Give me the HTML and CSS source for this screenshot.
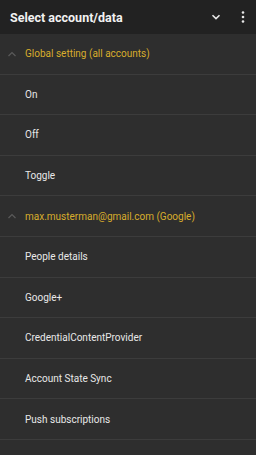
FILE: index.html
```html
<!DOCTYPE html>
<html lang="en">
<head>
  <meta charset="UTF-8" />
  <meta name="viewport" content="width=device-width, initial-scale=1.0"/>
  <title>Select account/data</title>
  <link rel="stylesheet" href="styles.css">
</head>
<body>
  <header class="app-bar">
    <div class="title">Select account/data</div>
    <button class="icon-btn chevron">
      <svg width="10" height="8" viewBox="0 0 10 8"><path d="M1.5 2.2 L5 5.6 L8.5 2.2" fill="none" stroke="#e8e8e8" stroke-width="1.6"/></svg>
    </button>
    <button class="icon-btn more">
      <svg width="4" height="14" viewBox="0 0 4 14"><circle cx="2" cy="2.5" r="1.3" fill="#e8e8e8"/><circle cx="2" cy="7" r="1.3" fill="#e8e8e8"/><circle cx="2" cy="11.5" r="1.3" fill="#e8e8e8"/></svg>
    </button>
  </header>

  <div class="list">
    <!-- global -->
    <div class="group-head">
      <svg class="caret" width="10" height="6" viewBox="0 0 10 6"><path d="M1.5 5 L5 1.5 L8.5 5" fill="none" stroke="#5a5a5a" stroke-width="1.2"/></svg>
      <span>Global setting (all accounts)</span>
    </div>
    <div class="row">On</div>
    <div class="row">Off</div>
    <div class="row">Toggle</div>

    <!-- account -->
    <div class="group-head">
      <svg class="caret" width="10" height="6" viewBox="0 0 10 6"><path d="M1.5 5 L5 1.5 L8.5 5" fill="none" stroke="#5a5a5a" stroke-width="1.2"/></svg>
      <span>max.musterman@gmail.com (Google)</span>
    </div>
    <div class="row">People details</div>
    <div class="row">Google+</div>
    <div class="row">CredentialContentProvider</div>
    <div class="row">Account State Sync</div>
    <div class="row">Push subscriptions</div>
    <div class="row"></div>
  </div>
</body>
</html>
```

FILE: styles.css
```css
html, body {
  margin: 0;
  padding: 0;
}
body {
  font-family: Roboto, "Liberation Sans", sans-serif;
  background: #2e2e2e;
  color: #e6e6e6;
  width: 256px;
  height: 455px;
  overflow: hidden;
}
.app-bar {
  display: flex;
  align-items: center;
  height: 34px;
  background: #222222;
  padding: 0 6px 0 10px;
}
.app-bar .title {
  flex: 1;
  font-size: 12.5px;
  font-weight: 700;
  color: #f2f2f2;
}
.icon-btn {
  background: none;
  border: none;
  padding: 0;
  display: flex;
  align-items: center;
  justify-content: center;
  cursor: pointer;
}
.icon-btn.chevron {
  width: 20px;
  height: 20px;
  margin-right: 10px;
}
.icon-btn.more {
  width: 14px;
  height: 20px;
}
.list {
  display: flex;
  flex-direction: column;
}
.group-head,
.row {
  display: flex;
  align-items: center;
  height: 39.6px;
  border-bottom: 1px solid #3c3c3c;
  font-size: 10px;
}
.group-head {
  padding-left: 7px;
  color: #d8ad2c;
}
.group-head .caret {
  margin-right: 8px;
}
.row {
  padding-left: 25px;
  color: #e8e8e8;
}
```
